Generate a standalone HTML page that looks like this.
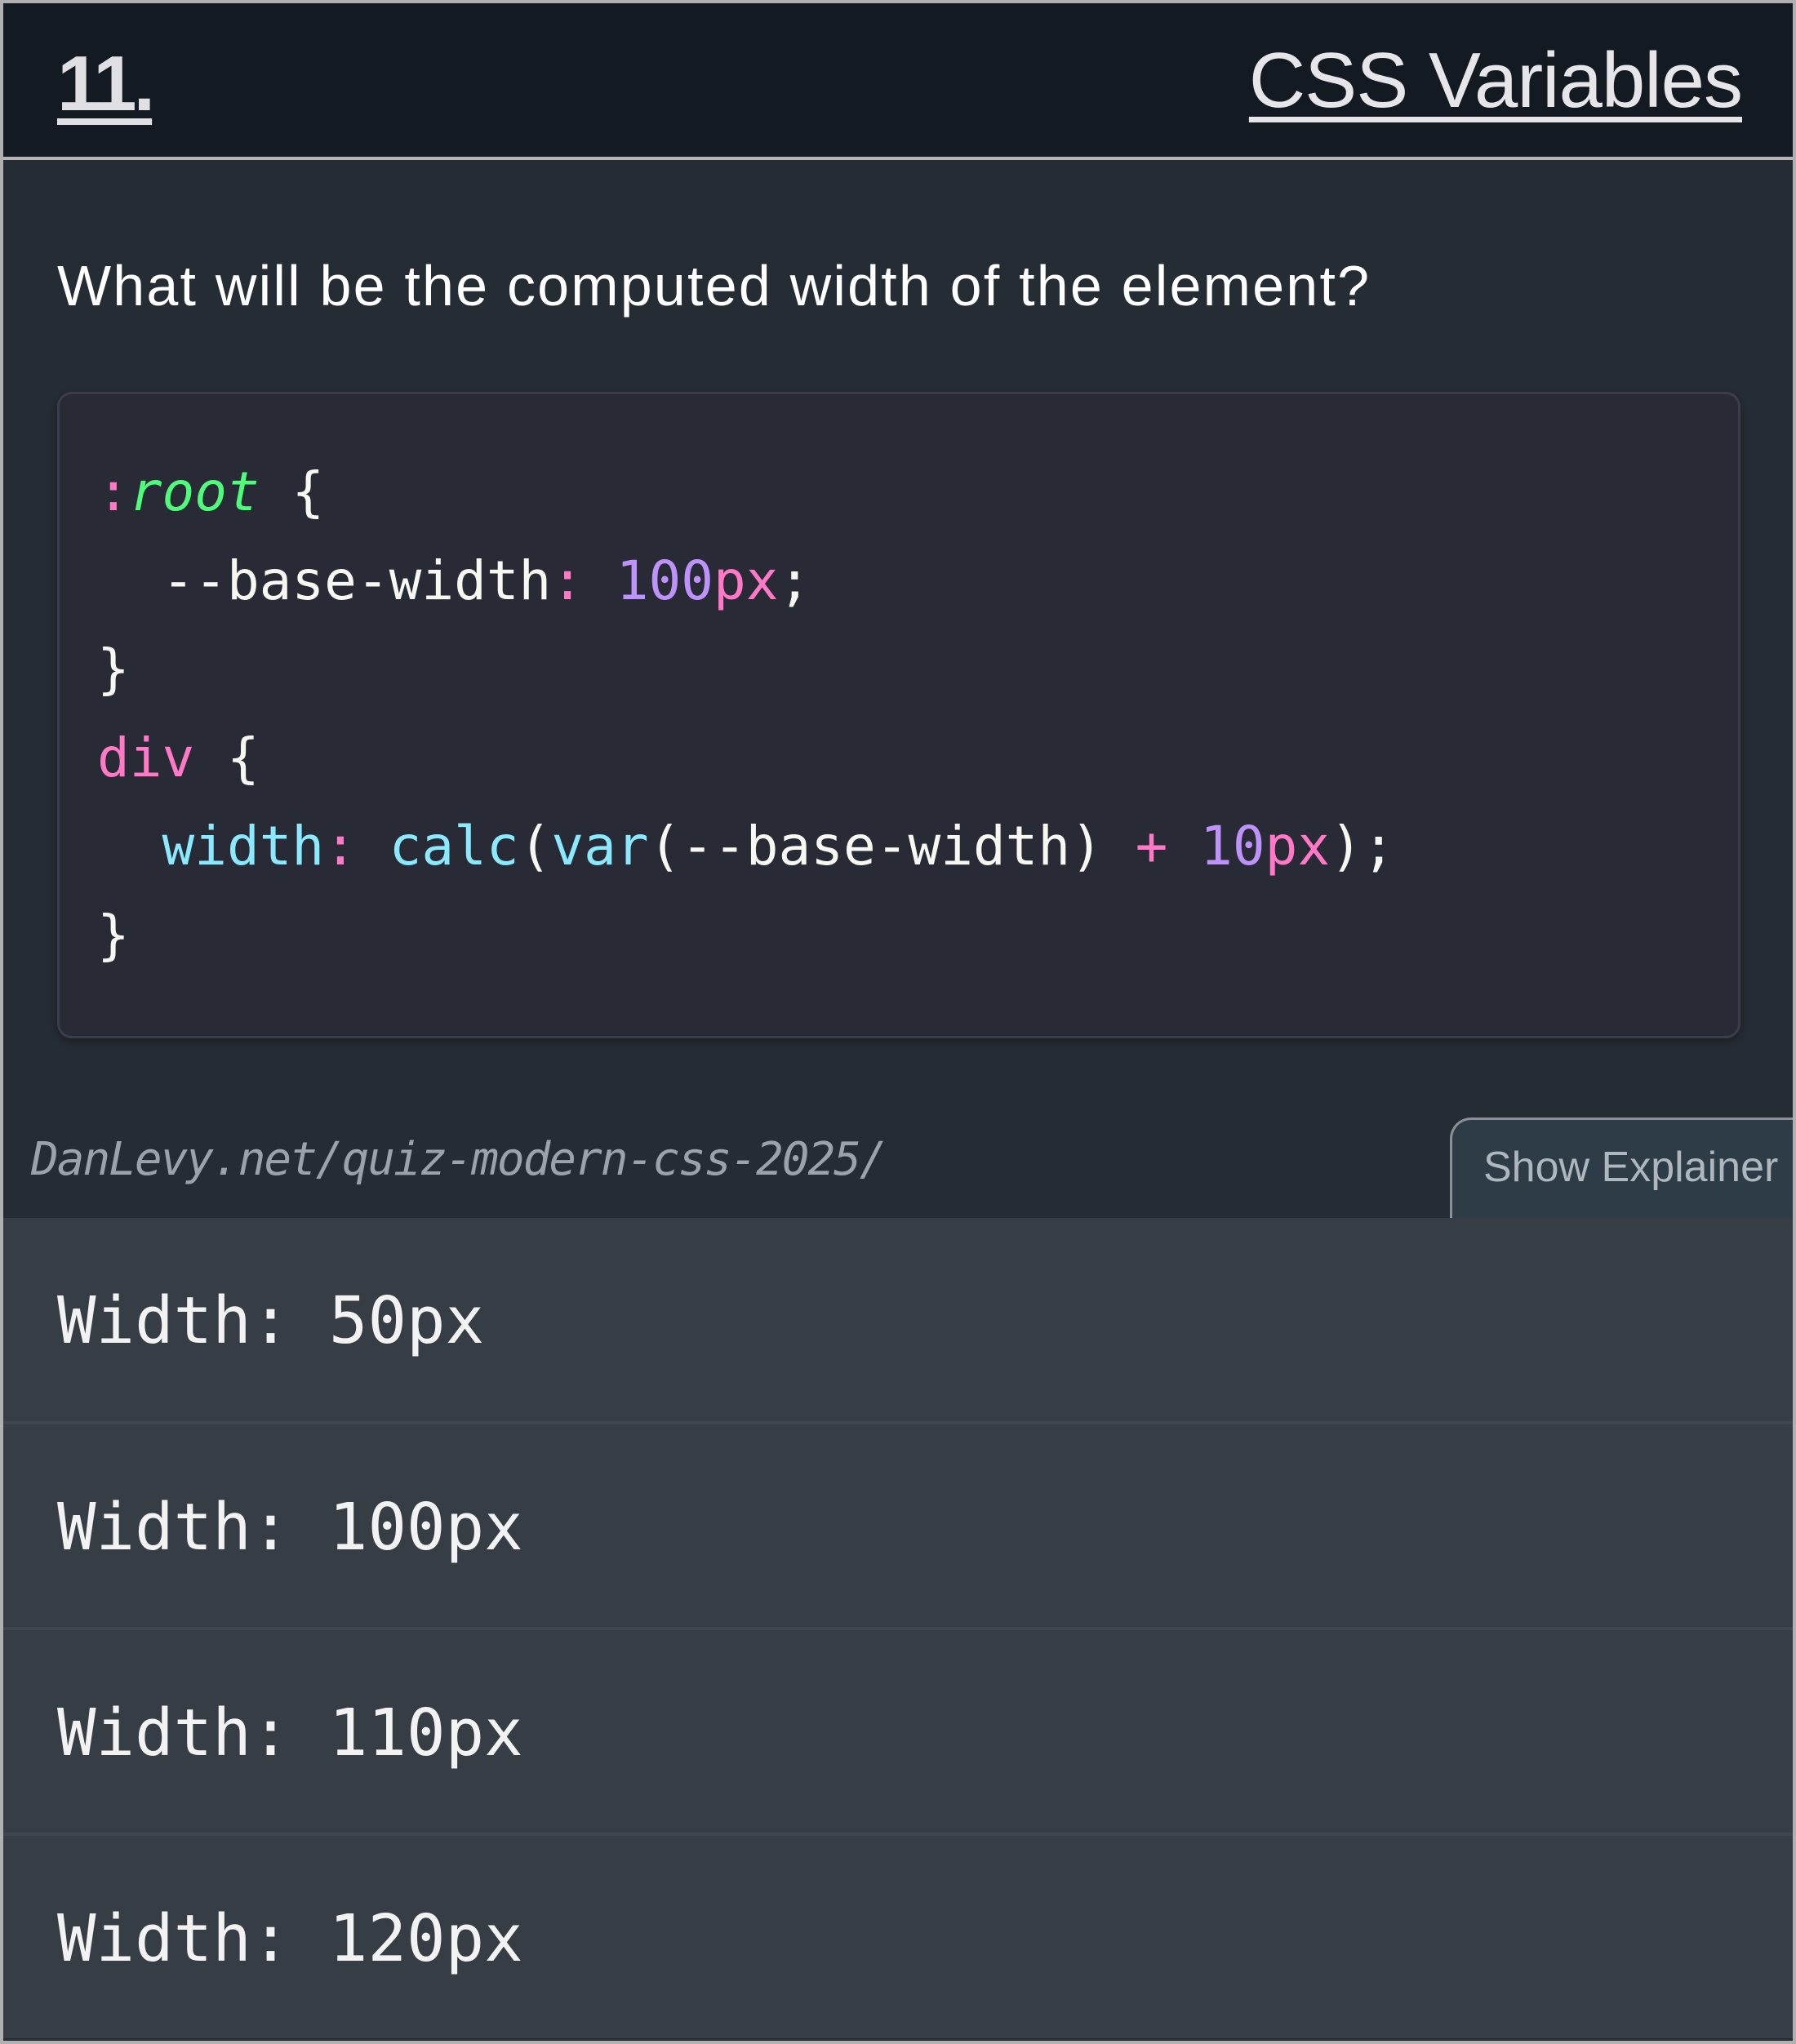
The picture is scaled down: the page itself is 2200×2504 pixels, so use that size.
<!DOCTYPE html>
<html><head><meta charset="utf-8"><style>
*{margin:0;padding:0;box-sizing:border-box}
body{width:2200px;height:2504px;background:#b0b0b0;position:relative;overflow:hidden;font-family:"Liberation Sans",sans-serif}
.frame{position:absolute;left:4px;top:4px;width:2192px;height:2496px;background:#262c33;overflow:hidden}
.hdr{position:absolute;left:0;top:0;width:2192px;height:192px;background:#131a21;border-bottom:4px solid #b4b4b4}
.num{position:absolute;left:66px;top:44px;font-size:96px;font-weight:bold;color:#e0e0e4;text-decoration:underline;text-decoration-thickness:8px;text-underline-offset:10px;letter-spacing:-4px}
.title{position:absolute;right:62px;top:40px;font-size:96px;font-weight:300;color:#e6e6ea;text-decoration:underline;text-decoration-thickness:7px;text-underline-offset:12px;letter-spacing:-1px}
.q{position:absolute;left:66px;top:306px;font-size:70px;color:#fff;white-space:nowrap;letter-spacing:2.2px}
.code{position:absolute;left:66px;top:476px;width:2062px;height:792px;background:#282a36;border:3px solid #3b3d4b;border-radius:18px;box-shadow:0 4px 10px rgba(0,0,0,.3)}
.code pre{position:absolute;left:46px;top:66px;font-family:"DejaVu Sans Mono","Liberation Mono",monospace;font-size:66px;line-height:108.5px;color:#f8f8f2}
.p{color:#ff79c6}.g{color:#50fa7b;font-style:italic}.c{color:#8be9fd}.v{color:#bd93f9}
.url{position:absolute;left:34px;top:1384px;font-family:"DejaVu Sans Mono","Liberation Mono",monospace;font-style:italic;font-size:56px;color:#9ba2aa;letter-spacing:-2px}
.btn{position:absolute;left:1772px;top:1365px;width:440px;height:140px;background:#2e3c48;border:3px solid #8a9098;border-right:none;border-radius:26px 0 0 0;color:#aeb6be;font-size:52px;padding:28px 0 0 38px}
.ans{position:absolute;left:0;width:2192px;height:252px;background:#363d45;border-top:4px solid #3f464e;font-family:"DejaVu Sans Mono","Liberation Mono",monospace;font-size:79px;color:#f2f2f2;padding:80px 0 0 66px}
</style></head><body><div class="frame">
<div class="hdr"><div class="num">11.</div><div class="title">CSS Variables</div></div>
<div class="q">What will be the computed width of the element?</div>
<div class="code"><pre><span class="p">:</span><span class="g">root</span> {
  --base-width<span class="p">:</span> <span class="v">100</span><span class="p">px</span>;
}
<span class="p">div</span> {
  <span class="c">width</span><span class="p">:</span> <span class="c">calc</span>(<span class="c">var</span>(--base-width) <span class="p">+</span> <span class="v">10</span><span class="p">px</span>);
}</pre></div>
<div class="url">DanLevy.net/quiz-modern-css-2025/</div>
<div class="btn">Show Explainer</div>
<div class="ans" style="top:1488px;border-top:none">Width: 50px</div>
<div class="ans" style="top:1737px">Width: 100px</div>
<div class="ans" style="top:1989px">Width: 110px</div>
<div class="ans" style="top:2241px">Width: 120px</div>
</div></body></html>
